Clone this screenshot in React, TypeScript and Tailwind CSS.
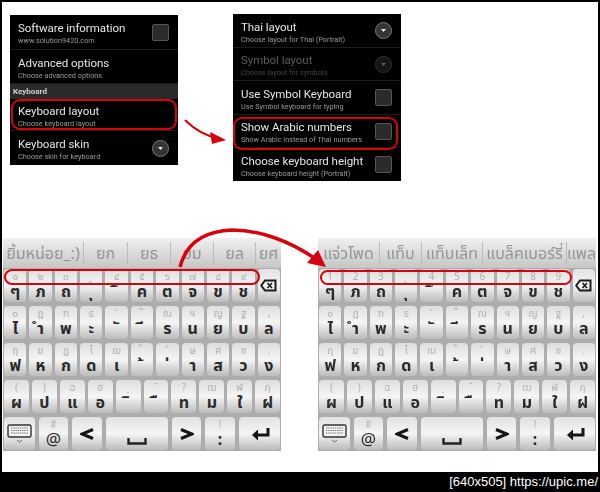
import React from 'react';

const thaiFont = "font-['Noto_Sans','Noto_Sans_Thai','DejaVu_Sans',sans-serif]";

// combining vowels and tone marks sit on a no-break space so that they keep a width
const mark = (s?: string) => (s && /^[\u0E31\u0E34-\u0E3A\u0E47-\u0E4E]$/.test(s) ? '\u00A0' + s : s);

const Check = ({ dim }: { dim?: boolean }) => (
  <div className={`w-[17px] h-[17px] rounded-[2px] border border-[#555] bg-[#2b2b2b] shrink-0 ${dim ? 'opacity-40' : ''}`} />
);

const Drop = ({ dim }: { dim?: boolean }) => (
  <div className={`w-[17px] h-[17px] rounded-full border border-[#777] bg-[#353535] flex items-center justify-center shrink-0 ${dim ? 'opacity-40' : ''}`}>
    <svg width="5" height="3" viewBox="0 0 5 3"><path d="M0 0h5L2.5 3z" fill="#e8e8e8" /></svg>
  </div>
);

type Item = { title: string; sub: string; ctrl?: 'check' | 'drop'; dim?: boolean; ring?: string; h: string };

const Row = ({ title, sub, ctrl, dim, ring, h }: Item) => (
  <div className={`relative flex items-center justify-between pl-2 pr-[9px] border-b border-[#1c1c1c] last:border-b-0 ${h}`}>
    <div className="flex flex-col pt-[2px]">
      <div className={`text-[11.5px] leading-[16px] tracking-[-0.05px] whitespace-nowrap ${dim ? 'text-[#5a5a5a]' : 'text-[#e6e6e6]'}`}>{title}</div>
      <div className={`text-[7.3px] leading-[10px] whitespace-nowrap ${dim ? 'text-[#444]' : 'text-[#9a9a9a]'}`}>{sub}</div>
    </div>
    {ctrl === 'check' && <Check dim={dim} />}
    {ctrl === 'drop' && <Drop dim={dim} />}
    {ring && <div className={`absolute rounded-[9px] border-[2.5px] border-[#d8000c] ${ring}`} />}
  </div>
);

const Key = ({ top, main, bold = true, cls = 'flex-1', size = 'text-[16px]' }: { top?: string; main: string; bold?: boolean; cls?: string; size?: string }) => (
  <div className={`${cls} rounded-[4px] bg-linear-to-b from-[#dedede] via-[#f5f5f5] to-[#bcbcbc] flex flex-col items-center justify-between py-[2px] overflow-hidden`}>
    <div className="text-[10px] leading-[11px] h-[11px] text-[#b0b0b0]">{mark(top)}</div>
    <div className={`${size} leading-[18px] h-[18px] text-[#2a2a2a] ${bold ? 'font-bold' : ''}`}>{mark(main)}</div>
  </div>
);

const IconKey = ({ cls, children, end }: { cls: string; children: React.ReactNode; end?: boolean }) => (
  <div className={`${cls} rounded-[4px] bg-linear-to-b from-[#e2e2e2] via-[#f5f5f5] to-[#bcbcbc] flex justify-center ${end ? 'items-end pb-[5px]' : 'items-center'}`}>
    {children}
  </div>
);

const Backspace = () => (
  <svg width="17" height="13" viewBox="0 0 17 13" fill="none" stroke="#1c1c1c" strokeWidth="2">
    <path d="M5 1.5h10.5v10H5L1.2 6.5z" />
    <path d="M7.5 4l4.5 5M12 4l-4.5 5" strokeWidth="1.6" />
  </svg>
);

const KeyboardIcon = () => (
  <svg width="25" height="20" viewBox="0 0 25 20" fill="none">
    <rect x="1" y="1" width="23" height="12" rx="1.5" stroke="#333" strokeWidth="1.4" fill="#f2f2f2" />
    <path d="M4 4h17M4 6.5h17M4 9h17" stroke="#777" strokeWidth="1.2" strokeDasharray="1.4 0.8" />
    <path d="M10 16l2.5 2 2.5-2" stroke="#666" strokeWidth="1" />
  </svg>
);

const Space = () => (
  <svg width="20" height="7" viewBox="0 0 20 7" fill="none" stroke="#222" strokeWidth="2.4"><path d="M1.5 0v5.5h17V0" /></svg>
);

const Chevron = ({ right }: { right?: boolean }) => (
  <svg width="14" height="12" viewBox="0 0 14 12" fill="none" stroke="#151515" strokeWidth="3">
    <path d={right ? 'M1 1.5L12 6 1 10.5' : 'M13 1.5L2 6l11 4.5'} />
  </svg>
);

const Enter = () => (
  <svg width="20" height="14" viewBox="0 0 20 14" fill="none" stroke="#151515" strokeWidth="3">
    <path d="M18 1v7H4" />
    <path d="M8 3L2.5 8 8 13" fill="#151515" strokeWidth="1" />
  </svg>
);

type Cap = [string, string];

const row2: Cap[] = [['๐', 'ไ'], ['ฎ', 'ำ'], ['ฑ', 'พ'], ['ธ', 'ะ'], ['ํ', 'ั'], ['๊', 'ี'], ['ณ', 'ร'], ['ฯ', 'น'], ['ญ', 'ย'], ['ฐ', 'บ'], [',', 'ล']];
const row3: Cap[] = [['ฤ', 'ฟ'], ['ฆ', 'ห'], ['ฏ', 'ก'], ['โ', 'ด'], ['ฌ', 'เ'], ['็', '้'], ['๋', '่'], ['ษ', 'า'], ['ศ', 'ส'], ['ซ', 'ว'], ['.', 'ง']];
const row4: Cap[] = [['(', 'ผ'], [')', 'ป'], ['ฉ', 'แ'], ['ฮ', 'อ'], ['ฺ', 'ิ'], ['์', 'ื'], ['?', 'ท'], ['ฒ', 'ม'], ['ฬ', 'ใ'], ['ฦ', 'ฝ']];
const mains = ['ๆ', 'ภ', 'ถ', 'ุ', 'ึ', 'ค', 'ต', 'จ', 'ข', 'ช'];

const Keyboard = ({ nums, words }: { nums: string[]; words: { t: string; w: string }[] }) => (
  <div className={`w-[278px] h-[213px] bg-[#adadad] flex flex-col ${thaiFont}`}>
    <div className="h-[31px] bg-linear-to-b from-[#f0f0f0] to-[#c6c6c6] flex items-center overflow-hidden text-[16px] text-[#969696] whitespace-nowrap">
      {words.map((x, i) => (
        <div key={i} className={`${x.w} shrink-0 h-[22px] flex items-center justify-center border-r border-[#bbb] last:border-r-0`}>{x.t}</div>
      ))}
    </div>
    <div className="flex-1 flex flex-col gap-[4px] px-[1px] pt-[1px] pb-[1px]">
      <div className="h-[33px] flex gap-[3px]">
        {mains.map((m, i) => <Key key={i} top={nums[i]} main={m} />)}
        <IconKey cls="flex-1"><Backspace /></IconKey>
      </div>
      {[row2, row3].map((r, j) => (
        <div key={j} className="h-[33px] flex gap-[3px]">
          {r.map((c, i) => <Key key={i} top={c[0]} main={c[1]} />)}
        </div>
      ))}
      <div className="h-[33px] flex gap-[3px]">
        {row4.map((c, i) => <Key key={i} top={c[0]} main={c[1]} />)}
      </div>
      <div className="h-[33px] flex gap-[4px]">
        <IconKey cls="w-[31px]"><KeyboardIcon /></IconKey>
        <Key cls="w-[29px]" top="#" main="@" bold={false} size="text-[17px]" />
        <IconKey cls="w-[30px]"><Chevron /></IconKey>
        <IconKey cls="flex-1" end><Space /></IconKey>
        <IconKey cls="w-[29px]"><Chevron right /></IconKey>
        <Key cls="w-[30px]" top="!" main=":" />
        <IconKey cls="w-[41px]"><Enter /></IconKey>
      </div>
    </div>
  </div>
);

const App: React.FC = () => {
  const leftItems: Item[] = [
    { title: 'Software information', sub: 'www.solution9420.com', ctrl: 'check', h: 'h-[35px]' },
    { title: 'Advanced options', sub: 'Choose advanced options', h: 'h-[34px]' },
  ];
  const rightItems: Item[] = [
    { title: 'Thai layout', sub: 'Choose layout for Thai (Portrait)', ctrl: 'drop', h: 'h-[34px]' },
    { title: 'Symbol layout', sub: 'Choose layout for symbols', ctrl: 'drop', dim: true, h: 'h-[33px]' },
    { title: 'Use Symbol Keyboard', sub: 'Use Symbol keyboard for typing', ctrl: 'check', h: 'h-[34px]' },
    { title: 'Show Arabic numbers', sub: 'Show Arabic instead of Thai numbers', ctrl: 'check', ring: 'left-0 right-[3px] top-[2px] -bottom-[3px]', h: 'h-[33px]' },
    { title: 'Choose keyboard height', sub: 'Choose keyboard height (Portrait)', ctrl: 'check', h: 'h-[33px]' },
  ];

  return (
    <div className="w-[600px] h-[492px] bg-black flex flex-col overflow-hidden font-['Roboto',sans-serif]">
      <div className="relative mx-[2px] mt-[2px] h-[470px] bg-white">
        <div className="flex items-start pl-[8px] pt-[13px] blur-[0.4px]">
          <div className="w-[168px] bg-black">
            {leftItems.map((x) => <Row key={x.title} {...x} />)}
            <div className="h-[15px] bg-[#2a2a2a] pl-[3px] text-[8px] leading-[15px] font-bold text-[#d0d0d0]">Keyboard</div>
            <Row title="Keyboard layout" sub="Choose keyboard layout" ring="inset-x-[1px] inset-y-0" h="h-[32px]" />
            <Row title="Keyboard skin" sub="Choose skin for keyboard" ctrl="drop" h="h-[34px]" />
          </div>
          <div className="w-[168px] bg-black ml-[55px] -mt-[1px]">
            {rightItems.map((x) => <Row key={x.title} {...x} />)}
          </div>
        </div>

        <div className="flex items-start justify-between pl-[1px] pr-[2px] mt-[57px] blur-[0.4px]">
          <Keyboard
            nums={['๑', '๒', '๓', 'ู', '๔', '๕', '๖', '๗', '๘', '๙']}
            words={[
              { t: 'ยิ้มหน่อย_:)', w: 'w-[81px]' },
              { t: 'ยก', w: 'w-[44px]' },
              { t: 'ยธ', w: 'w-[43px]' },
              { t: 'ยม', w: 'w-[43px]' },
              { t: 'ยล', w: 'w-[42px]' },
              { t: 'ยศ', w: 'w-[25px]' },
            ]}
          />
          <Keyboard
            nums={['1', '2', '3', 'ู', '4', '5', '6', '7', '8', '9']}
            words={[
              { t: 'แจ่วโพด', w: 'w-[62px]' },
              { t: 'แท็บ', w: 'w-[42px]' },
              { t: 'แท็บเล็ท', w: 'w-[61px]' },
              { t: 'แบล็คเบอร์รี่', w: 'w-[84px]' },
              { t: 'แพล', w: 'w-[29px]' },
            ]}
          />
        </div>

        {/* red marks drawn over the screenshots */}
        <div className="absolute left-[2px] top-[267px] w-[256px] h-[16px] rounded-[8px] border-2 border-[#d8000c]" />
        <div className="absolute left-[318px] top-[268px] w-[252px] h-[15px] rounded-[8px] border-2 border-[#d8000c]" />
        <svg className="absolute left-0 top-0" width="596" height="300" viewBox="2 2 596 300" fill="none">
          <path d="M180 267C187 240 207 231 232 230C258 230 290 240 320 262" stroke="#d8000c" strokeWidth="3.5" />
          <path d="M307 263L326 267L318 250z" fill="#d8000c" />
          <path d="M185 120C195 130 205 136 218 138" stroke="#d8000c" strokeWidth="2" />
          <path d="M210 132L226 140L212 144z" fill="#d8000c" />
        </svg>
      </div>
      <div className="flex-1 flex items-center justify-end pr-[2px] text-[13px] text-white font-['Liberation_Sans',sans-serif]">
        [640x505] https://upic.me/
      </div>
    </div>
  );
};

export default App;
